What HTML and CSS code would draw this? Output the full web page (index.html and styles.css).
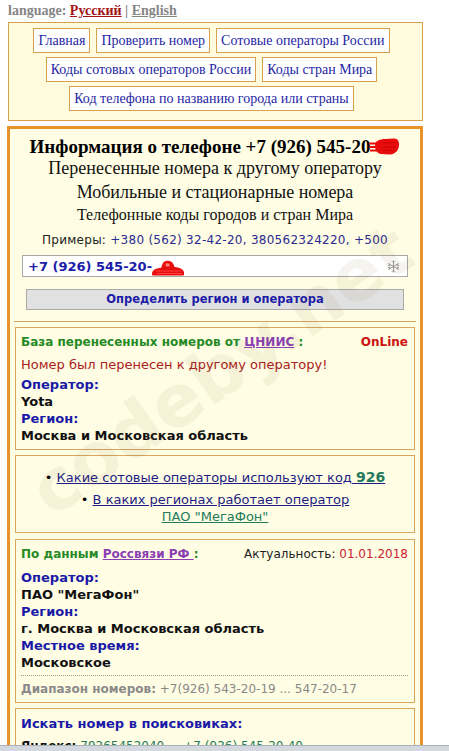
FILE: index.html
```html
<!DOCTYPE html>
<html lang="ru">
<head>
<meta charset="utf-8">
<title>Информация о телефоне</title>
<link rel="stylesheet" href="styles.css">
</head>
<body>
<div class="lang">language: <a class="lang-ru">Русский</a> | <a class="lang-en">English</a></div>

<div class="nav">
  <div class="nav-row"><a>Главная</a><a>Проверить номер</a><a>Сотовые операторы России</a></div>
  <div class="nav-row"><a>Коды сотовых операторов России</a><a>Коды стран Мира</a></div>
  <div class="nav-row"><a>Код телефона по названию города или страны</a></div>
</div>

<div class="main">
  <h1 class="title">Информация о телефоне +7 (926) 545-20<svg class="scribble-title" width="31" height="19" viewBox="0 0 31 19"><path d="M6 8 C6 4 11 2 16 2 L25 1.5 C29 1.5 30.5 5 30 8.5 C29.5 13 27 17 21 17.5 L12 17 C8 16.5 6 13 6 8Z" fill="#e80c0c"/><path d="M0 6.5 H11 M0.5 10 H10 M1 13.5 H10" stroke="#e80c0c" stroke-width="2"/><path d="M14 6 L26 5.5 M13 10 L27 10 M14 13.5 L25 13.5" stroke="#c80000" stroke-width="0.8"/></svg></h1>
  <div class="sub sub-a">Перенесенные номера к другому оператору</div>
  <div class="sub sub-b">Мобильные и стационарные номера</div>
  <div class="sub-small">Телефонные коды городов и стран Мира</div>
  <div class="examples">Примеры: <span class="ex-nums">+380 (562) 32-42-20, 380562324220, +500</span></div>

  <div class="phone-input">
    <span class="phone-text">+7 (926) 545-20-</span><svg class="scribble-input" width="34" height="17" viewBox="0 0 34 17"><path d="M1 15 C1 11 5 9 10 9 L11.5 5 C12.5 1.5 17 1 20 2.5 C22 3.5 23 6 23.5 8 C28.5 8.5 32 10 33 13 L33 15.5 C33 16.5 32 16.5 31 16.5 L3 16.5 C1.5 16.5 1 16 1 15Z" fill="#e80c0c"/><path d="M14.5 5 C15.5 4 17.5 4 18.5 5.5 L18.5 7.5 L15 7.5Z" fill="#ff8080"/><path d="M5 12 H30 M6 14.5 H31" stroke="#ff5050" stroke-width="0.8"/></svg>
    <svg class="snow" width="13" height="13" viewBox="0 0 13 13"><g stroke="#9c9c9c" stroke-width="1" fill="none"><path d="M6.5 0.5 V12.5 M1.3 3.5 L11.7 9.5 M1.3 9.5 L11.7 3.5"/><path d="M5 1.3 L6.5 2.8 L8 1.3 M5 11.7 L6.5 10.2 L8 11.7 M0.8 5.3 L2.8 5.7 L2.3 3.7 M12.2 7.7 L10.2 7.3 L10.7 9.3 M0.8 7.7 L2.8 7.3 L2.3 9.3 M12.2 5.3 L10.2 5.7 L10.7 3.7"/></g></svg>
  </div>
  <div class="btn">Определить регион и оператора</div>
  <div class="sep"></div>

  <div class="box box-moved">
    <div class="box-head">
      <span class="head-green">База перенесенных номеров от <a class="link-purple">ЦНИИС</a> :</span>
      <span class="online">OnLine</span>
    </div>
    <div class="moved-msg">Номер был перенесен к другому оператору!</div>
    <div class="facts">
      <div class="lbl">Оператор:</div>
      <div class="val">Yota</div>
      <div class="lbl">Регион:</div>
      <div class="val">Москва и Московская область</div>
    </div>
  </div>

  <div class="box box-links">
    <div class="li-line"><span class="bullet">•</span> <a class="link-blue">Какие сотовые операторы используют код <b class="code">926</b></a></div>
    <div class="li-line li-second"><span class="bullet">•</span> <a class="link-blue">В каких регионах работает оператор</a></div>
    <div class="li-line"><a class="link-teal">ПАО "МегаФон"</a></div>
  </div>

  <div class="box box-rs">
    <div class="box-head">
      <span class="head-green">По данным <a class="link-purple">Россвязи РФ </a>:</span>
      <span class="actual">Актуальность: <span class="date">01.01.2018</span></span>
    </div>
    <div class="facts">
      <div class="lbl">Оператор:</div>
      <div class="val">ПАО "МегаФон"</div>
      <div class="lbl">Регион:</div>
      <div class="val">г. Москва и Московская область</div>
      <div class="lbl">Местное время:</div>
      <div class="val">Московское</div>
    </div>
    <div class="range"><b>Диапазон номеров:</b> +7(926) 543-20-19 ... 547-20-17</div>
  </div>

  <div class="box box-search">
    <div class="search-head">Искать номер в поисковиках:</div>
    <div class="search-line"><b>Яндекс:</b> <a class="link-teal">79265452040</a> ... <a class="link-teal">+7 (926) 545-20-40</a></div>
  </div>
</div>

<div class="watermark">codeby.net</div>
<div class="taskbar"></div>
</body>
</html>
```

FILE: styles.css
```css
html, body {
  margin: 0;
  padding: 0;
  background: #ffffff;
  overflow: hidden;
}
body {
  font-family: "DejaVu Sans", Verdana, sans-serif;
  color: #111;
  height: 751px;
  position: relative;
}
a { cursor: pointer; }

.lang {
  font: bold 14px/20px "Liberation Serif", "Times New Roman", serif;
  color: #858585;
  padding: 1px 0 0 8px;
  height: 21px;
}
.lang-ru { color: #a31515; text-decoration: underline; }
.lang-en { color: #858585; text-decoration: underline; }

.nav {
  margin: 0 26px 0 8px;
  border: 1px solid #d9a04c;
  background: #fffbdc;
  padding: 5px 8px 9px 0;
  display: flex;
  flex-direction: column;
  gap: 4px;
}
.nav-row {
  display: flex;
  justify-content: center;
  gap: 6px;
}
.nav-row a {
  display: block;
  background: #ffffff;
  border: 1px solid #d9a04c;
  padding: 0 4px;
  font: 14px/23px "Liberation Serif", "Times New Roman", serif;
  color: #1f1fa6;
  white-space: nowrap;
}

.main {
  margin: 5px 26px 0 7px;
  border: 3px solid #e8922a;
  border-bottom: none;
  background: #fffde3;
  padding-top: 7px;
  height: 640px;
}

.title {
  margin: 0;
  font: bold 19px/22px "Liberation Serif", "Times New Roman", serif;
  color: #000;
  text-align: center;
  white-space: nowrap;
}
.scribble-title { vertical-align: -3px; margin-left: -1px; }
.sub {
  font-family: "Liberation Serif", "Times New Roman", serif;
  font-size: 18px;
  text-align: center;
  color: #111;
}
.sub-a { line-height: 20px; }
.sub-b { line-height: 28px; }
.sub-small {
  font: 16px/18px "Liberation Serif", "Times New Roman", serif;
  text-align: center;
  color: #111;
}
.examples {
  padding-top: 8px;
  font-size: 12px;
  line-height: 16px;
  letter-spacing: 0.27px;
  text-align: center;
  color: #222;
}
.ex-nums { color: #2b2b92; }

.phone-input {
  margin: 7px 12px 0;
  height: 20px;
  border: 1px solid #a9a9a9;
  background: #ffffff;
  display: flex;
  align-items: center;
  padding: 0 7px 0 5px;
}
.phone-text {
  font-weight: bold;
  font-size: 13px;
  color: #1c1ca8;
  white-space: nowrap;
}
.scribble-input { margin-left: -1px; margin-top: 2px; }
.snow { margin-left: auto; }

.btn {
  margin: 12px 16px 0;
  height: 19px;
  border: 1px solid #a9a9a9;
  background: #e1e1e1;
  font-weight: bold;
  font-size: 11.5px;
  line-height: 19px;
  color: #1c1ca8;
  text-align: center;
}
.sep {
  margin: 11px 4px 0;
  border-top: 1px solid #d9a55a;
}

.box {
  margin: 6px 5px 0;
  border: 1px solid #d9a55a;
  background: #fffde3;
  padding: 6px 6px 4px 5px;
}
.box-moved { margin-top: 5px; padding-bottom: 5px; }

.box-head {
  display: flex;
  justify-content: space-between;
  align-items: baseline;
  font-size: 12px;
  line-height: 17px;
}
.head-green { color: #258a25; font-weight: bold; }
.link-purple { color: #8b3fb3; text-decoration: underline; }
.online { color: #cc1111; font-weight: bold; }
.moved-msg {
  margin-top: 5px;
  font-size: 13px;
  line-height: 17px;
  color: #aa2020;
}
.facts { margin-top: 3px; font-size: 13px; line-height: 17px; font-weight: bold; }
.lbl { color: #1a1aa8; }
.val { color: #111; }

.box-links {
  margin-top: 5px;
  padding: 13px 6px 7px;
  text-align: center;
  font-size: 13px;
  line-height: 17px;
}
.li-second { margin-top: 5px; }
.bullet { color: #000; }
.link-blue { color: #1d1d85; text-decoration: underline; }
.code { color: #237a5c; font-size: 14px; }
.link-teal { color: #237a5c; text-decoration: underline; }

.box-rs .facts { margin-top: 6px; }
.actual { color: #222; font-weight: normal; }
.date { color: #cc2233; }
.range {
  margin-top: 4px;
  border-top: 1px dotted #9a9a9a;
  padding-top: 5px;
  font-size: 12px;
  line-height: 17px;
  color: #8a8a8a;
}

.box-search { margin-top: 5px; }
.search-head {
  font-size: 13px;
  font-weight: bold;
  line-height: 18px;
  color: #1a1aa8;
}
.search-line {
  margin-top: 5px;
  font-size: 12px;
  line-height: 17px;
  color: #111;
}

.watermark {
  position: absolute;
  left: 38px;
  top: 462px;
  font: bold 72px/72px "DejaVu Sans", sans-serif;
  color: rgba(120, 105, 60, 0.07);
  transform: rotate(-35deg);
  transform-origin: left center;
  pointer-events: none;
  white-space: nowrap;
}

.taskbar {
  position: absolute;
  left: 0;
  right: 0;
  bottom: 0;
  height: 5px;
  background: #d3d8de;
  border-top: 1px solid #a9b1ba;
}
```
